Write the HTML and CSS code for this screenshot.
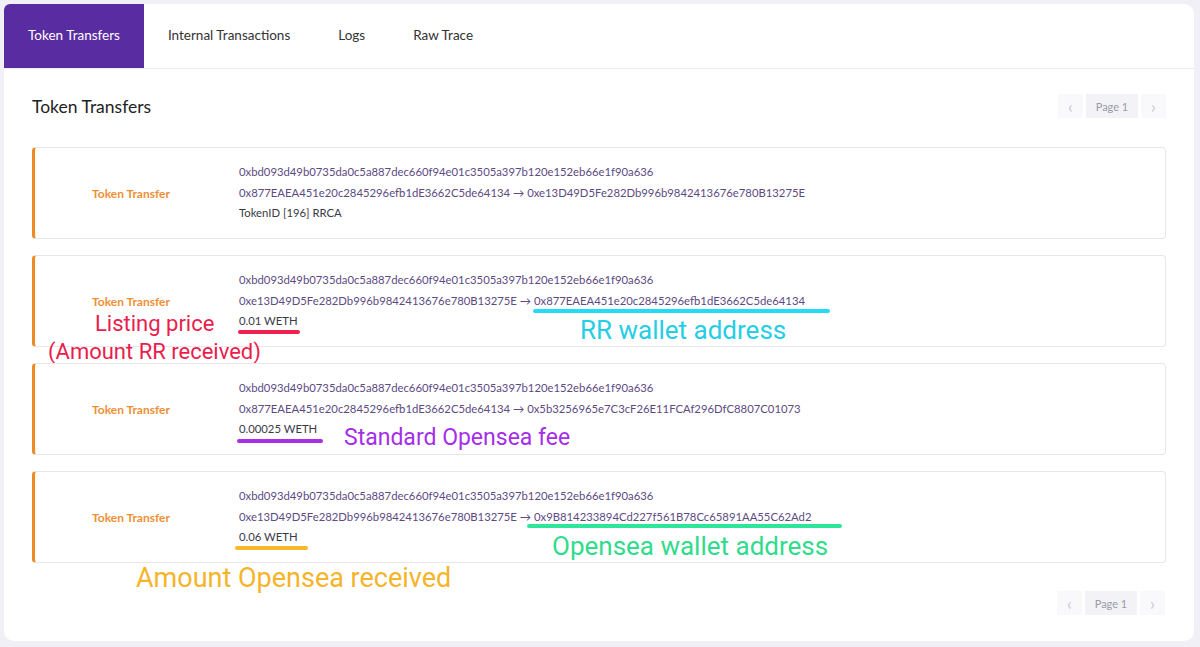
FILE: index.html
```html
<!DOCTYPE html>
<html lang="en">
<head>
    <meta charset="UTF-8">
    <meta name="viewport" content="width=device-width, initial-scale=1.0">
    <title>Token Transfers</title>
    <link rel="stylesheet" href="styles.css">
</head>
<body>
    <div class="panel">
        <div class="tabs">
            <div class="tab active">Token Transfers</div>
            <div class="tab">Internal Transactions</div>
            <div class="tab">Logs</div>
            <div class="tab">Raw Trace</div>
        </div>

        <div class="content">
            <div class="content-head">
                <h2>Token Transfers</h2>
                <div class="pager">
                    <span class="pager-arrow">&#8249;</span>
                    <span class="pager-page">Page 1</span>
                    <span class="pager-arrow">&#8250;</span>
                </div>
            </div>

            <div class="transfer">
                <div class="transfer-type">Token Transfer</div>
                <div class="transfer-info">
                    <div class="hash">0xbd093d49b0735da0c5a887dec660f94e01c3505a397b120e152eb66e1f90a636</div>
                    <div class="hash">0x877EAEA451e20c2845296efb1dE3662C5de64134 &rarr; 0xe13D49D5Fe282Db996b9842413676e780B13275E</div>
                    <div class="amount">TokenID [196] RRCA</div>
                </div>
            </div>

            <div class="transfer">
                <div class="transfer-type">Token Transfer</div>
                <div class="transfer-info">
                    <div class="hash">0xbd093d49b0735da0c5a887dec660f94e01c3505a397b120e152eb66e1f90a636</div>
                    <div class="hash">0xe13D49D5Fe282Db996b9842413676e780B13275E &rarr; 0x877EAEA451e20c2845296efb1dE3662C5de64134</div>
                    <div class="amount">0.01 WETH</div>
                </div>
                <!-- annotations drawn over the screenshot -->
                <span class="mark mark-red"></span>
                <span class="note note-red note-listing">Listing price</span>
                <span class="note note-red note-amount-rr">(Amount RR received)</span>
                <span class="mark mark-cyan"></span>
                <span class="note note-cyan">RR wallet address</span>
            </div>

            <div class="transfer">
                <div class="transfer-type">Token Transfer</div>
                <div class="transfer-info">
                    <div class="hash">0xbd093d49b0735da0c5a887dec660f94e01c3505a397b120e152eb66e1f90a636</div>
                    <div class="hash">0x877EAEA451e20c2845296efb1dE3662C5de64134 &rarr; 0x5b3256965e7C3cF26E11FCAf296DfC8807C01073</div>
                    <div class="amount">0.00025 WETH</div>
                </div>
                <span class="mark mark-purple"></span>
                <span class="note note-purple">Standard Opensea fee</span>
            </div>

            <div class="transfer">
                <div class="transfer-type">Token Transfer</div>
                <div class="transfer-info">
                    <div class="hash">0xbd093d49b0735da0c5a887dec660f94e01c3505a397b120e152eb66e1f90a636</div>
                    <div class="hash">0xe13D49D5Fe282Db996b9842413676e780B13275E &rarr; 0x9B814233894Cd227f561B78Cc65891AA55C62Ad2</div>
                    <div class="amount">0.06 WETH</div>
                </div>
                <span class="mark mark-orange"></span>
                <span class="note note-orange">Amount Opensea received</span>
                <span class="mark mark-green"></span>
                <span class="note note-green">Opensea wallet address</span>
            </div>

            <div class="content-foot">
                <div class="pager">
                    <span class="pager-arrow">&#8249;</span>
                    <span class="pager-page">Page 1</span>
                    <span class="pager-arrow">&#8250;</span>
                </div>
            </div>
        </div>
    </div>
</body>
</html>
```

FILE: styles.css
```css
body {
    margin: 0;
    padding: 4px 6px 6px 4px;
    background-color: #f0f0f6;
    font-family: Lato, "Open Sans", sans-serif;
    color: #333;
}

.panel {
    background-color: #fff;
    border-radius: 6px 10px 10px 10px;
    height: 637px;
    box-sizing: border-box;
}

.tabs {
    display: flex;
    height: 64px;
    border-bottom: 1px solid #ececf0;
}

.tab {
    display: flex;
    align-items: center;
    padding: 0 24px 2px 24px;
    font-size: 13.5px;
    color: #333;
}

.tab.active {
    background-color: #5a2ca2;
    color: #fff;
    border-top-left-radius: 6px;
}

.content {
    padding: 24px 28px 0 28px;
}

.content-head {
    display: flex;
    justify-content: space-between;
    align-items: center;
    height: 26px;
    margin-bottom: 28px;
}

.content-head h2 {
    margin: 0;
    font-size: 17.5px;
    font-weight: 400;
    color: #222;
}

.pager {
    display: flex;
    gap: 3px;
    height: 24px;
}

.pager-arrow,
.pager-page {
    display: flex;
    align-items: center;
    justify-content: center;
    font-size: 11px;
    color: #9a9aa6;
    background-color: #f9f9fb;
}

.pager-arrow {
    width: 25px;
    font-size: 17px;
    color: #c8c8d0;
}

.pager-page {
    width: 52px;
    background-color: #f3f3f7;
}

.transfer {
    position: relative;
    display: flex;
    align-items: center;
    height: 92px;
    box-sizing: border-box;
    margin-bottom: 16px;
    border: 1px solid #e6e6ec;
    border-left: 3px solid #f08b22;
    border-radius: 4px;
}

.transfer-type {
    width: 192px;
    text-align: center;
    font-size: 12px;
    font-weight: 700;
    color: #ef8f35;
}

.transfer-info {
    margin-left: 12px;
    font-size: 11.3px;
    line-height: 20.5px;
}

.hash {
    color: #5d4a82;
}

.amount {
    color: #3a3a44;
}

.content-foot {
    display: flex;
    justify-content: flex-end;
    margin-top: 28px;
    padding-right: 1px;
}

/* annotations */
.mark {
    position: absolute;
    height: 4px;
    border-radius: 2px;
    filter: blur(0.4px);
}

.note {
    position: absolute;
    font-family: Roboto, "Open Sans", sans-serif;
    white-space: nowrap;
    line-height: 1;
}

.mark-red { left: 203px; top: 74px; width: 62px; background-color: #f2204f; }
.mark-cyan { left: 498px; top: 53px; width: 297px; background-color: #22dbf6; }
.mark-purple { left: 202px; top: 75px; width: 86px; background-color: #a82fe2; }
.mark-orange { left: 200px; top: 74px; width: 73px; background-color: #f8b82a; }
.mark-green { left: 492px; top: 52px; width: 315px; background-color: #2ee69a; }

.note-red { color: #ea1d4d; font-size: 22px; }
.note-listing { left: 60px; top: 57px; }
.note-amount-rr { left: 13px; top: 85px; }

.note-cyan { left: 545px; top: 61px; font-size: 26px; color: #26cde6; }
.note-purple { left: 309px; top: 62px; font-size: 23px; color: #a52ee8; }
.note-orange { left: 101px; top: 93px; font-size: 27px; color: #f5b42a; }
.note-green { left: 517px; top: 61px; font-size: 26px; color: #30dc8c; }
```
